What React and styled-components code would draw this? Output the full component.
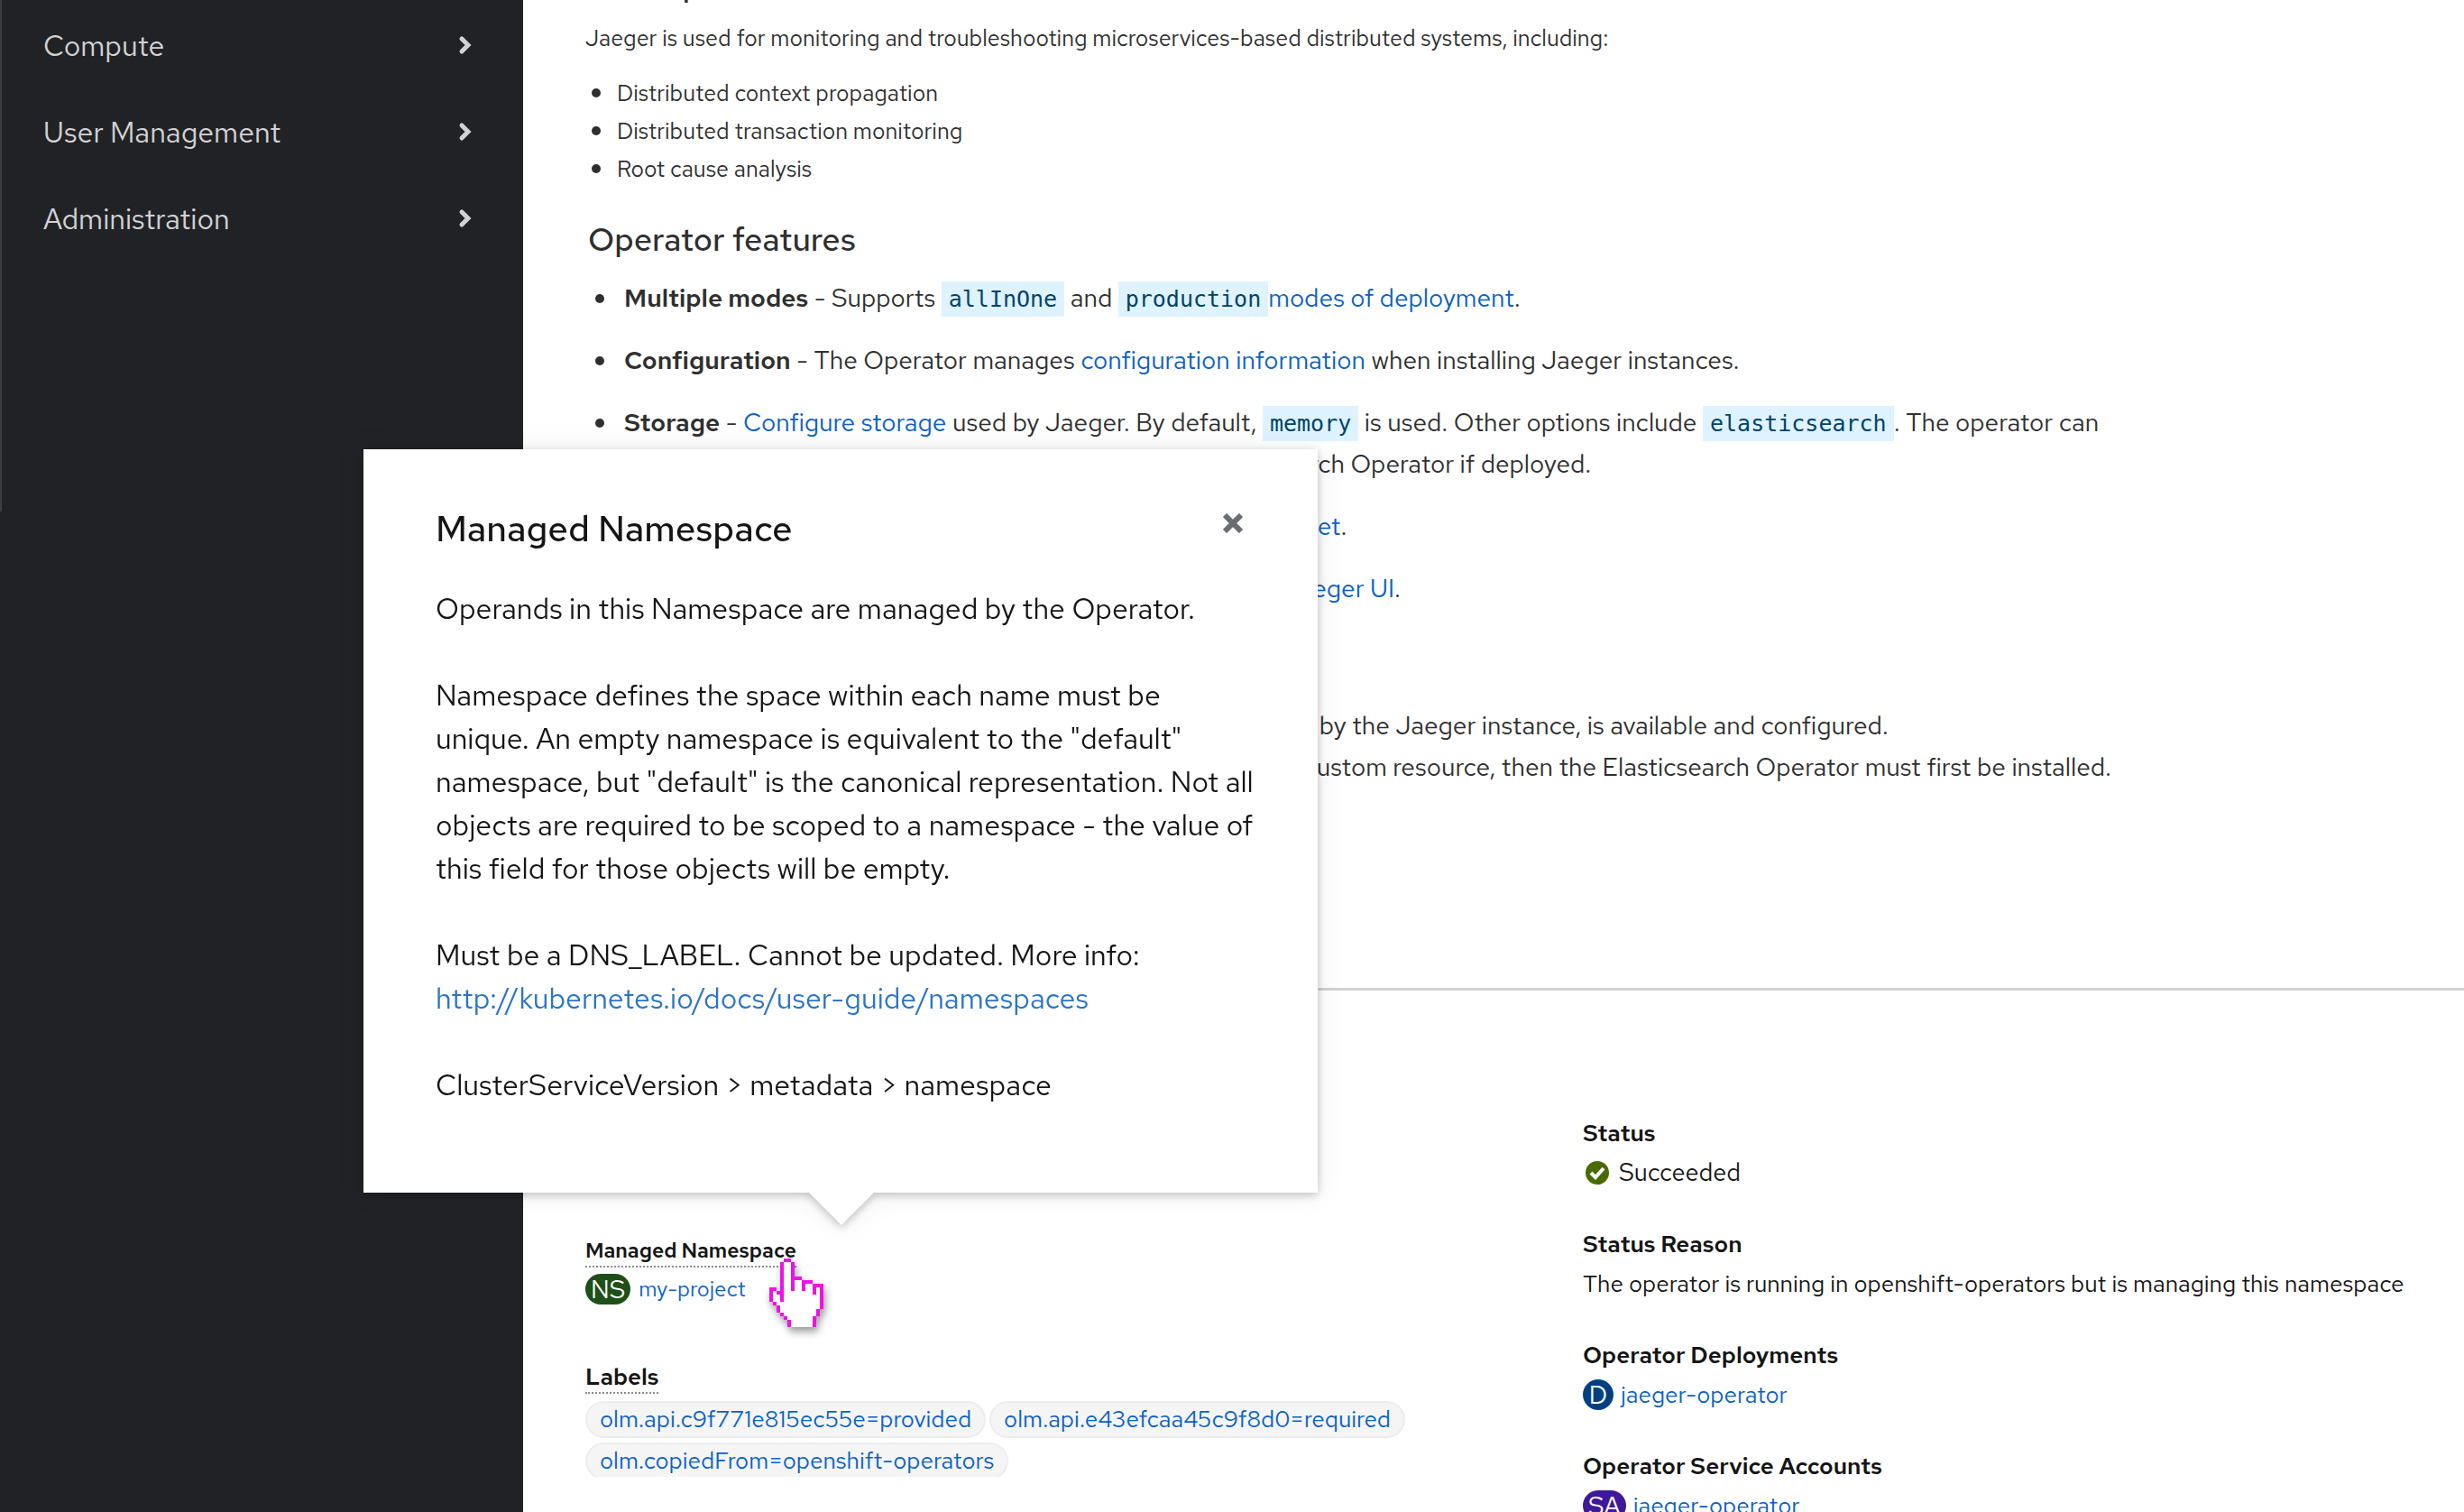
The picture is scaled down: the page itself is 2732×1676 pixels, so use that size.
import React from "react";
import styled, { createGlobalStyle } from "styled-components";

const sans = `"Red Hat Text", Inter, "Liberation Sans", sans-serif`;
const mono = `"DejaVu Sans Mono", "Liberation Mono", monospace`;

const GlobalStyle = createGlobalStyle`
  *, *::before, *::after { box-sizing: border-box; }
  body { margin: 0; background: #fff; font-family: ${sans}; color: #151515; }
  h2, h3, p, ul, ol, dl, dd { margin: 0; padding: 0; }
  button { font: inherit; border: 0; background: none; padding: 0; cursor: pointer; }
`;

const Shell = styled.div`
  display: grid;
  grid-template-columns: 580px 1fr;
  height: 100vh;
  overflow: hidden;
`;

const Sidebar = styled.nav`
  background: #212226;
`;

const NavList = styled.ul`
  list-style: none;
  padding-top: 2px;
  height: 567px;
  border-left: 2px solid #3c3f42;
`;

const NavButton = styled.button`
  display: flex;
  align-items: center;
  justify-content: space-between;
  width: 100%;
  height: 96px;
  padding: 0 57px 0 46px;
  color: #d2d2d2;
  font-size: 32px;
`;

const Main = styled.main`
  min-width: 0;
`;

const Description = styled.section`
  margin-top: -38px;
  padding-left: 69px;
  color: #2f2f2f;
`;

const SectionTitle = styled.h2`
  padding-left: 3px;
  font-size: 36px;
  line-height: 42px;
  font-weight: 500;
`;

const Intro = styled.p`
  margin-top: 18px;
  font-size: 25px;
  line-height: 42px;
`;

const BulletList = styled.ul`
  list-style: none;

  & > li::before {
    content: "";
    display: inline-block;
    width: 10px;
    height: 10px;
    margin-left: -32px;
    margin-right: 22px;
    border-radius: 50%;
    background: currentColor;
    vertical-align: 4px;
  }
`;

const SmallList = styled(BulletList)`
  margin-top: 19px;
  margin-bottom: 35px;
  padding-left: 35px;
  font-size: 25px;
  line-height: 42px;

  & > li::before {
    margin-left: -28px;
    margin-right: 18px;
  }
`;

const FeatureList = styled(BulletList)`
  display: flex;
  flex-direction: column;
  gap: 23px;
  margin-top: 21px;
  padding-left: 43px;
  font-size: 28px;
  line-height: 46px;
`;

const StepList = styled.ol`
  margin-top: 20px;
  padding-left: 43px;
  font-size: 28px;
  line-height: 46px;
`;

const Prerequisites = styled.div`
  margin-top: 44px;
`;

const Strong = styled.strong`
  font-weight: 600;
`;

const Link = styled.a`
  color: #0b61c4;
  text-decoration: none;
`;

const Code = styled.code`
  padding: 5px 8px;
  background: #def3ff;
  color: #004368;
  font-family: ${mono};
  font-size: 25px;
  line-height: 1;
`;

const Details = styled.section`
  display: grid;
  grid-template-columns: 1fr 1fr;
  column-gap: 149px;
  margin-left: 69px;
  margin-top: 222px;
  padding: 138px 20px 0 0;
  border-top: 3px solid #d2d2d2;
`;

const Column = styled.dl`
  display: flex;
  flex-direction: column;
  padding-top: ${(p) => p.$offset || 0}px;
`;

const Field = styled.div`
  position: relative;
  height: ${(p) => p.$height || 123}px;
`;

const Term = styled.dt`
  font-size: 26px;
  line-height: 40px;
  font-weight: 600;
`;

const HelpButton = styled.button`
  display: block;
  height: 36px;
  border-bottom: 2px dotted #8a8d90;
  color: #151515;
  font-size: ${(p) => p.$size}px;
  font-weight: 600;
  line-height: 32px;
`;

const Value = styled.dd`
  display: flex;
  align-items: center;
  gap: ${(p) => p.$gap || 8}px;
  height: 47px;
  font-size: ${(p) => p.$size || 26}px;
  white-space: nowrap;
`;

const Badge = styled.span`
  display: inline-flex;
  align-items: center;
  justify-content: center;
  min-width: 34px;
  height: 34px;
  padding: 0 ${(p) => p.$pad}px;
  border-radius: 17px;
  background: ${(p) => p.$color};
  color: #fff;
  font-size: 28px;
`;

const Labels = styled.dd`
  display: flex;
  flex-wrap: wrap;
  gap: 5px 4px;
  max-width: 920px;
  height: 84px;
  margin-top: 8px;
  overflow: hidden;
`;

const Pill = styled.a`
  height: 41px;
  padding: 0 14px;
  border: 2px solid #ededed;
  border-radius: 21px;
  background: #f5f5f5;
  color: #0b61c4;
  font-size: 26px;
  line-height: 36px;
  text-decoration: none;
`;

const Popover = styled.div`
  position: absolute;
  z-index: 2;
  left: -246px;
  bottom: calc(100% + 47px);
  width: 1058px;
  height: 824px;
  padding: 64px 60px 0 80px;
  background: #fff;
  filter: drop-shadow(0 3px 5px rgba(3, 3, 3, 0.22)) drop-shadow(0 0 14px rgba(3, 3, 3, 0.08));

  &::after {
    content: "";
    position: absolute;
    left: 494px;
    top: 100%;
    border: 36px solid transparent;
    border-top-color: #fff;
    border-bottom: 0;
  }
`;

const PopoverHead = styled.header`
  display: flex;
  justify-content: space-between;
  padding-right: 23px;
`;

const PopoverTitle = styled.h3`
  font-size: 40px;
  font-weight: 500;
  line-height: 48px;
`;

const CloseButton = styled.button`
  display: flex;
  height: 36px;
  align-items: center;
`;

const PopoverBody = styled.div`
  display: flex;
  flex-direction: column;
  gap: 48px;
  margin-top: 41px;
  font-size: 32px;
  line-height: 48px;
  white-space: nowrap;
`;

const PopoverLink = styled(Link)`
  color: #2b74c8;
`;

const Hand = styled.svg`
  position: absolute;
  z-index: 3;
  left: 204px;
  top: 26px;
  filter: drop-shadow(2px 5px 4px rgba(0, 0, 0, 0.4));
`;

const Chevron = () => (
  <svg
    width="15"
    height="22"
    viewBox="0 0 15 22"
    fill="none"
    stroke="#d2d2d2"
    strokeWidth="5"
    strokeLinecap="round"
    aria-hidden="true"
  >
    <path d="M4 4 L11 11 L4 18" />
  </svg>
);

const handRects = [
  [4, 0, 2, 1], [3, 1, 1, 11], [6, 1, 1, 8], [7, 5, 2, 1], [9, 6, 1, 3], [9, 6, 3, 1],
  [12, 7, 1, 3], [12, 7, 2, 1], [14, 7, 1, 7], [13, 14, 1, 2], [12, 16, 1, 3], [0, 8, 2, 1],
  [0, 8, 1, 4], [2, 9, 1, 1], [1, 12, 1, 1], [2, 13, 1, 2], [3, 15, 1, 1], [4, 16, 1, 1], [5, 17, 1, 2],
];

const HandCursor = () => (
  <Hand width="60" height="76" viewBox="0 0 15 19" shapeRendering="crispEdges" aria-hidden="true">
    <path
      fill="#fff"
      d="M4 0h2v1h1v4h2v1h3v1h3v7h-1v2h-1v3H5v-2H4v-1H3v-1H2v-2H1v-1H0V8h2v1h1V1h1z"
    />
    {handRects.map(([x, y, w, h]) => (
      <rect key={`${x}-${y}-${w}`} x={x} y={y} width={w} height={h} fill="#ee12e4" />
    ))}
  </Hand>
);

const navItems = ["Compute", "User Management", "Administration"];

export default function App() {
  return (
    <>
      <GlobalStyle />
      <Shell>
        <Sidebar>
          <NavList>
            {navItems.map((item) => (
              <li key={item}>
                <NavButton type="button">
                  {item}
                  <Chevron />
                </NavButton>
              </li>
            ))}
          </NavList>
        </Sidebar>
        <Main>
          <Description>
            <SectionTitle>Description</SectionTitle>
            <Intro>
              Jaeger is used for monitoring and troubleshooting microservices-based distributed systems, including:
            </Intro>
            <SmallList>
              <li>Distributed context propagation</li>
              <li>Distributed transaction monitoring</li>
              <li>Root cause analysis</li>
            </SmallList>
            <SectionTitle>Operator features</SectionTitle>
            <FeatureList>
              <li>
                <Strong>Multiple modes</Strong> - Supports <Code>allInOne</Code> and <Code>production</Code>
                <Link href="#modes">modes of deployment</Link>.
              </li>
              <li>
                <Strong>Configuration</Strong> - The Operator manages{" "}
                <Link href="#configuration">configuration information</Link> when installing Jaeger instances.
              </li>
              <li>
                <Strong>Storage</Strong> - <Link href="#storage">Configure storage</Link> used by Jaeger. By default,{" "}
                <Code>memory</Code> is used. Other options include <Code>elasticsearch</Code>. The operator can
                <br />
                delegate creation of an Elasticsearch cluster to the Elasticsearch Operator if deployed.
              </li>
              <li>
                <Strong>Agent</Strong> - can optionally be installed as{" "}
                <Link href="#agent">sidecar and/or daemonset</Link>.
              </li>
              <li>
                <Strong>UI</Strong> - Optionally adds ingress/route to provide <Link href="#ui">access to the Jaeger UI</Link>.
              </li>
            </FeatureList>
            <Prerequisites>
              <SectionTitle>Before you start</SectionTitle>
              <StepList>
                <li>
                  Ensure that the appropriate storage solution, that will be used by the Jaeger instance, is available and
                  configured.
                </li>
                <li>
                  If intending to deploy an Elasticsearch cluster via the Jaeger custom resource, then the Elasticsearch
                  Operator must first be installed.
                </li>
              </StepList>
            </Prerequisites>
          </Description>
          <Details>
            <Column $offset={133}>
              <Field $height={140}>
                <dt>
                  <HelpButton type="button" $size={23}>Managed Namespace</HelpButton>
                </dt>
                <Value $size={24} $gap={9}>
                  <Badge $color="#1e4f18" $pad={6}>NS</Badge>
                  <Link href="#my-project">my-project</Link>
                </Value>
                <Popover role="dialog" aria-labelledby="popover-title">
                  <PopoverHead>
                    <PopoverTitle id="popover-title">Managed Namespace</PopoverTitle>
                    <CloseButton type="button" aria-label="Close">
                      <svg width="22" height="22" viewBox="0 0 22 22" stroke="#6a6e73" strokeWidth="6" aria-hidden="true">
                        <path d="M2 2 L20 20 M20 2 L2 20" />
                      </svg>
                    </CloseButton>
                  </PopoverHead>
                  <PopoverBody>
                    <p>Operands in this Namespace are managed by the Operator.</p>
                    <p>
                      Namespace defines the space within each name must be
                      <br />
                      unique. An empty namespace is equivalent to the "default"
                      <br />
                      namespace, but "default" is the canonical representation. Not all
                      <br />
                      objects are required to be scoped to a namespace - the value of
                      <br />
                      this field for those objects will be empty.
                    </p>
                    <p>
                      Must be a DNS_LABEL. Cannot be updated. More info:
                      <br />
                      <PopoverLink href="#namespaces">http://kubernetes.io/docs/user-guide/namespaces</PopoverLink>
                    </p>
                    <p>ClusterServiceVersion &gt; metadata &gt; namespace</p>
                  </PopoverBody>
                </Popover>
                <HandCursor />
              </Field>
              <Field $height={140}>
                <dt>
                  <HelpButton type="button" $size={26}>Labels</HelpButton>
                </dt>
                <Labels>
                  <Pill href="#provided">olm.api.c9f771e815ec55e=provided</Pill>
                  <Pill href="#required">olm.api.e43efcaa45c9f8d0=required</Pill>
                  <Pill href="#copied">olm.copiedFrom=openshift-operators</Pill>
                </Labels>
              </Field>
            </Column>
            <Column>
              <Field>
                <Term>Status</Term>
                <Value $size={27} $gap={10}>
                  <svg width="30" height="28" viewBox="0 0 30 28" aria-hidden="true">
                    <circle cx="16" cy="14" r="13" fill="#486b00" />
                    <path d="M9 14 L14 19 L23 9" fill="none" stroke="#fff" strokeWidth="4" />
                  </svg>
                  Succeeded
                </Value>
              </Field>
              <Field>
                <Term>Status Reason</Term>
                <Value>The operator is running in openshift-operators but is managing this namespace</Value>
              </Field>
              <Field>
                <Term>Operator Deployments</Term>
                <Value>
                  <Badge $color="#004080" $pad={0}>D</Badge>
                  <Link href="#deployment">jaeger-operator</Link>
                </Value>
              </Field>
              <Field>
                <Term>Operator Service Accounts</Term>
                <Value>
                  <Badge $color="#40199a" $pad={6}>SA</Badge>
                  <Link href="#account">jaeger-operator</Link>
                </Value>
              </Field>
            </Column>
          </Details>
        </Main>
      </Shell>
    </>
  );
}
